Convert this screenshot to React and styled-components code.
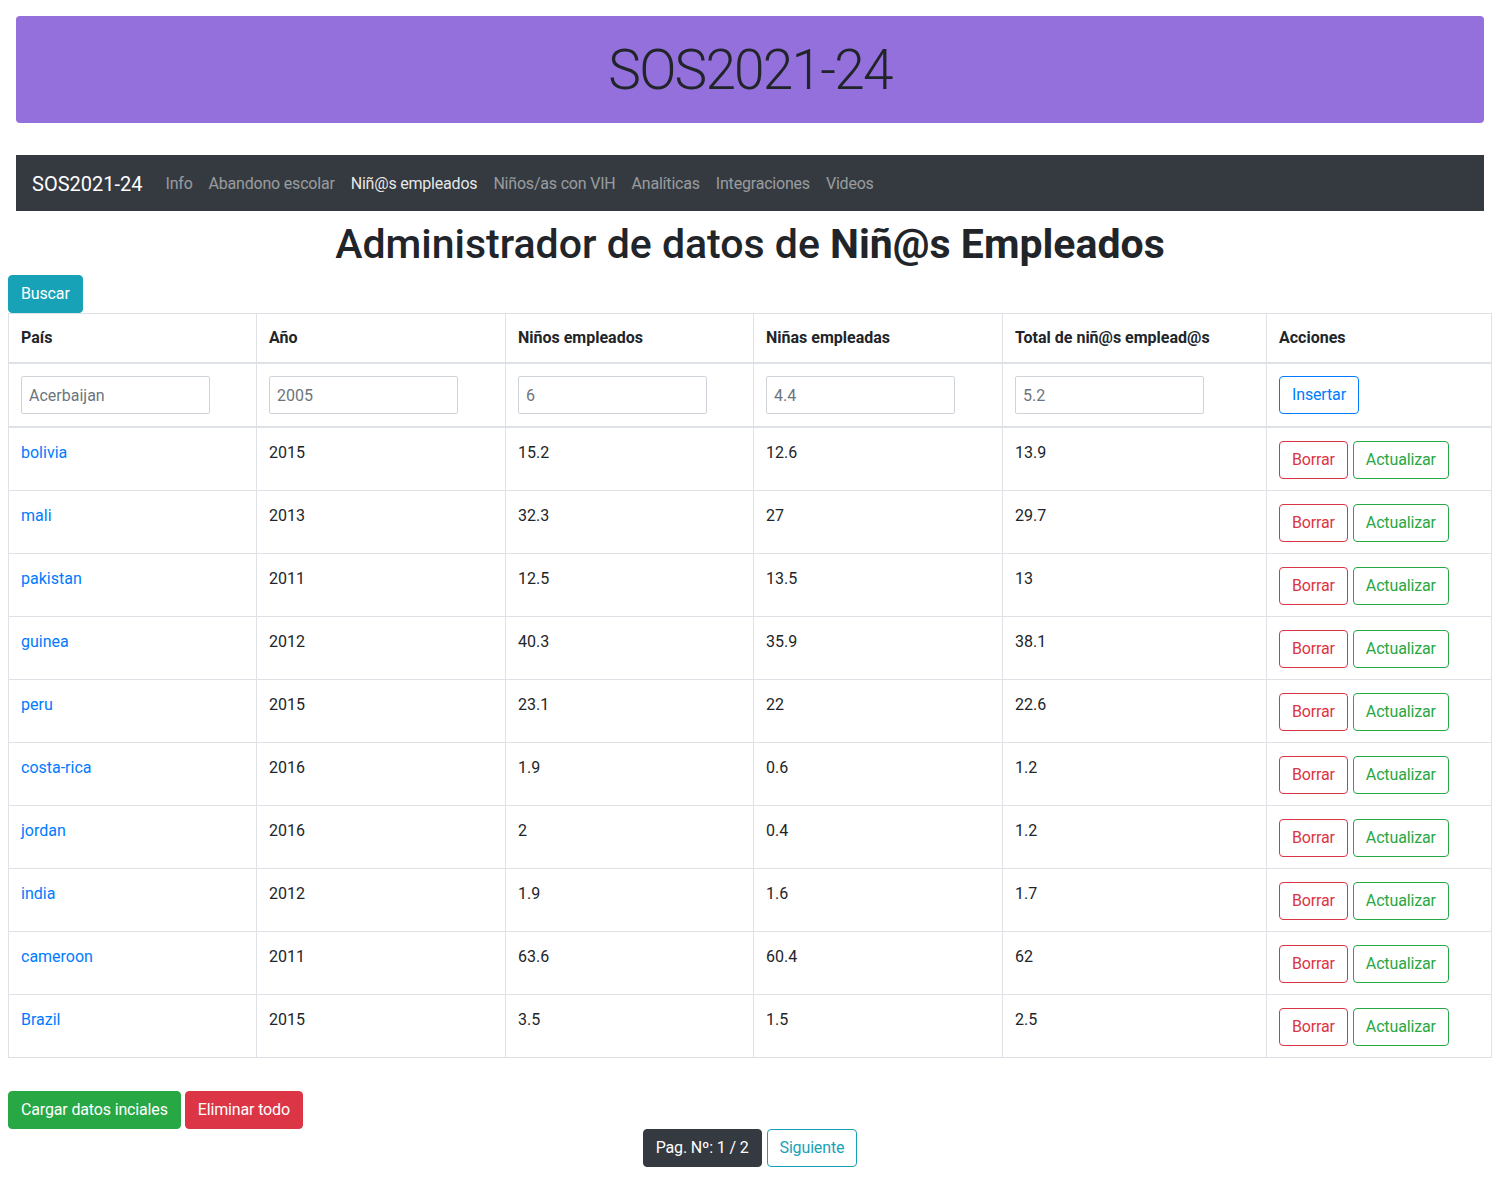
import React from "react";
import styled, { createGlobalStyle } from "styled-components";

const GlobalStyle = createGlobalStyle`
  body {
    margin: 8px;
    font-family: "Segoe UI", Roboto, "Liberation Sans", sans-serif;
    font-size: 16px;
    line-height: 1.5;
    color: #212529;
    background: #fff;
  }
  * { box-sizing: border-box; }
`;

const Jumbo = styled.header`
  margin: 8px 8px 32px;
  height: 107px;
  background: #9370db;
  border-radius: 4px;
  display: flex;
  align-items: center;
  justify-content: center;
`;

const JumboTitle = styled.h1`
  margin: 0;
  font-size: 55px;
  font-weight: 300;
  letter-spacing: -1.8px;
  line-height: 1.2;
  color: #212529;
`;

const Navbar = styled.nav`
  margin: 0 8px;
  height: 56px;
  padding: 8px 16px;
  background: #343a40;
  display: flex;
  align-items: center;
`;

const Brand = styled.a`
  font-size: 20px;
  color: #fff;
  margin-right: 15px;
  line-height: 30px;
  padding-top: 2px;
`;

const NavLink = styled.a`
  padding: 9px 8px 7px;
  font-size: 16px;
  letter-spacing: -0.2px;
  color: ${(p) => (p.$active ? "rgba(255,255,255,0.9)" : "rgba(255,255,255,0.5)")};
`;

const Title = styled.h1`
  margin: 9px 0 6px;
  text-align: center;
  font-size: 41px;
  font-weight: 500;
  line-height: 1.2;
  b { font-weight: 700; }
`;

const Button = styled.button`
  font-family: inherit;
  font-size: 16px;
  line-height: 24px;
  padding: 6px 12px;
  border-radius: 4px;
  letter-spacing: -0.15px;
  border: 1px solid ${(p) => p.$color};
  background: ${(p) => (p.$outline ? "#fff" : p.$color)};
  color: ${(p) => (p.$outline ? p.$color : "#fff")};
  cursor: pointer;
`;

const Table = styled.table`
  width: 100%;
  border-collapse: collapse;
  table-layout: fixed;
  margin-bottom: 33px;
  th, td {
    border: 1px solid #dee2e6;
    padding: 12px;
    text-align: left;
    vertical-align: top;
  }
  tbody + tbody td {
    padding-top: 13px;
    padding-bottom: 11px;
  }
  thead th {
    vertical-align: bottom;
    border-bottom: 2px solid #dee2e6;
    font-weight: 700;
  }
  tbody + tbody {
    border-top: 2px solid #dee2e6;
  }
`;

const Input = styled.input`
  width: 189px;
  height: 38px;
  padding: 6px 7px;
  font-family: inherit;
  font-size: 16px;
  border: 1px solid #ced4da;
  border-radius: 2px;
  color: #495057;
  &::placeholder { color: #6c757d; }
`;

const CountryLink = styled.a`
  color: #007bff;
  text-decoration: none;
`;

const Actions = styled.div`
  display: flex;
  gap: 5px;
`;

const Footer = styled.div`
  display: flex;
  gap: 4px;
`;

const Pager = styled.div`
  display: flex;
  justify-content: center;
  gap: 5px;
`;

const rows = [
  ["bolivia", 2015, 15.2, 12.6, 13.9],
  ["mali", 2013, 32.3, 27, 29.7],
  ["pakistan", 2011, 12.5, 13.5, 13],
  ["guinea", 2012, 40.3, 35.9, 38.1],
  ["peru", 2015, 23.1, 22, 22.6],
  ["costa-rica", 2016, 1.9, 0.6, 1.2],
  ["jordan", 2016, 2, 0.4, 1.2],
  ["india", 2012, 1.9, 1.6, 1.7],
  ["cameroon", 2011, 63.6, 60.4, 62],
  ["Brazil", 2015, 3.5, 1.5, 2.5],
];

const widths = [248, 249, 248, 249, 264];
const heads = ["País", "Año", "Niños empleados", "Niñas empleadas", "Total de niñ@s emplead@s", "Acciones"];

export default function App() {
  return (
    <>
      <GlobalStyle />
      <Jumbo>
        <JumboTitle>SOS2021-24</JumboTitle>
      </Jumbo>
      <Navbar>
        <Brand>SOS2021-24</Brand>
        <NavLink>Info</NavLink>
        <NavLink>Abandono escolar</NavLink>
        <NavLink $active>Niñ@s empleados</NavLink>
        <NavLink>Niños/as con VIH</NavLink>
        <NavLink>Analíticas</NavLink>
        <NavLink>Integraciones</NavLink>
        <NavLink>Videos</NavLink>
      </Navbar>
      <Title>
        Administrador de datos de <b>Niñ@s Empleados</b>
      </Title>
      <Button $color="#17a2b8">Buscar</Button>
      <Table>
        <colgroup>
          {widths.map((w, i) => (
            <col key={i} style={{ width: w }} />
          ))}
          <col />
        </colgroup>
        <thead>
          <tr>
            {heads.map((h) => (
              <th key={h}>{h}</th>
            ))}
          </tr>
        </thead>
        <tbody>
          <tr>
            <td><Input placeholder="Acerbaijan" /></td>
            <td><Input placeholder="2005" /></td>
            <td><Input placeholder="6" /></td>
            <td><Input placeholder="4.4" /></td>
            <td><Input placeholder="5.2" /></td>
            <td><Button $outline $color="#007bff">Insertar</Button></td>
          </tr>
        </tbody>
        <tbody>
          {rows.map((r) => (
            <tr key={r[0]}>
              <td><CountryLink href="#">{r[0]}</CountryLink></td>
              <td>{r[1]}</td>
              <td>{r[2]}</td>
              <td>{r[3]}</td>
              <td>{r[4]}</td>
              <td>
                <Actions>
                  <Button $outline $color="#dc3545">Borrar</Button>
                  <Button $outline $color="#28a745">Actualizar</Button>
                </Actions>
              </td>
            </tr>
          ))}
        </tbody>
      </Table>
      <Footer>
        <Button $color="#28a745">Cargar datos inciales</Button>
        <Button $color="#dc3545">Eliminar todo</Button>
      </Footer>
      <Pager>
        <Button $color="#343a40">Pag. Nº: 1 / 2</Button>
        <Button $outline $color="#17a2b8">Siguiente</Button>
      </Pager>
    </>
  );
}
